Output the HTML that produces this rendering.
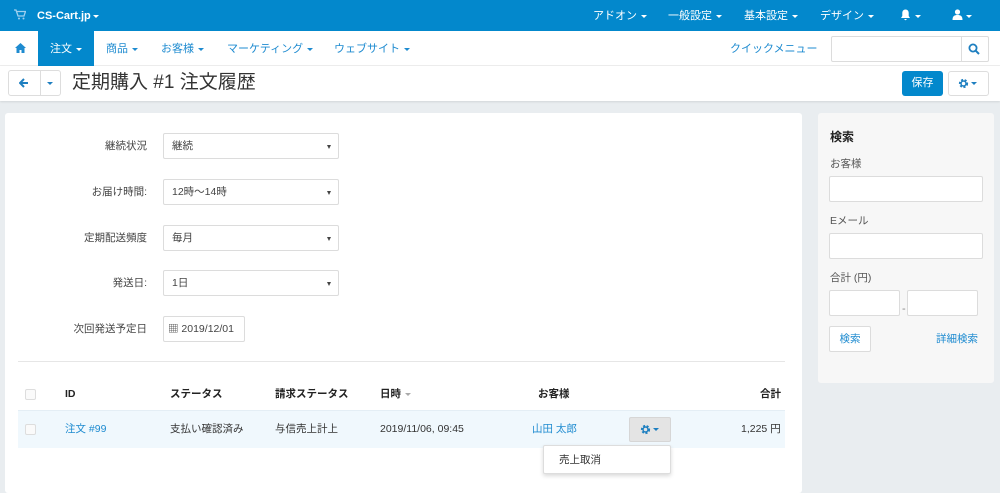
<!DOCTYPE html>
<html><head><meta charset="utf-8"><style>
*{box-sizing:border-box;margin:0;padding:0}
body{width:1000px;height:481px;overflow:hidden;background:#e9edf0;font-family:"Liberation Sans","Noto Sans CJK JP",sans-serif;font-size:11px;line-height:14px;color:#333;position:relative}
.a{position:absolute}
.top{left:0;top:0;width:1000px;height:31px;background:#0388cc;color:#fff;font-size:11px}
.top span{position:absolute;top:9px}
.nav{left:0;top:31px;width:1000px;height:35px;background:#fff;border-bottom:1px solid #eee;color:#1e8bd0;font-size:11px}
.nav span{position:absolute;top:11px}
.caret{display:inline-block;width:0;height:0;border-left:3px solid transparent;border-right:3px solid transparent;border-top:3px solid currentColor;vertical-align:middle;margin-left:4px}
.title{left:0;top:66px;width:1000px;height:35px;background:#fff;box-shadow:0 1px 2px rgba(0,0,0,.1)}
.btn{border:1px solid #ddd;border-radius:3px;background:#fff}
.panel{background:#fff;border-radius:3px}
.lbl{width:147px;text-align:right;left:0;color:#444;font-size:10.5px}
.sel{left:163px;width:176px;height:26px;border:1px solid #dcdcdc;border-radius:2px;background:#fff;font-size:10.5px;padding:5px 8px;color:#444}
.sel:after{content:"";position:absolute;right:7px;top:11px;border-left:2.5px solid transparent;border-right:2.5px solid transparent;border-top:4px solid #444}
.inp{border:1px solid #dcdcdc;border-radius:2px;background:#fff}
.hd{font-weight:bold;font-size:10.5px;top:387px;color:#222}
.rw{top:422px;font-size:10.5px}
.cb{width:11px;height:11px;border:1px solid #ddd;border-radius:2px;background:#fafafa}
</style></head><body>
<div class="a top">
<svg class="a" style="left:14px;top:9px" width="12" height="11" viewBox="0 0 12 11"><path d="M0 1h2l2 6h6l1.5-4.5H3" fill="none" stroke="#9fd0ef" stroke-width="1.3"/><circle cx="5" cy="9.5" r="1" fill="#9fd0ef"/><circle cx="9.5" cy="9.5" r="1" fill="#9fd0ef"/></svg>
<span style="left:37px;font-weight:bold">CS-Cart.jp<i class="caret" style="margin-left:2px"></i></span>
<span style="left:593px">アドオン<i class="caret"></i></span>
<span style="left:668px">一般設定<i class="caret"></i></span>
<span style="left:744px">基本設定<i class="caret"></i></span>
<span style="left:820px">デザイン<i class="caret"></i></span>
<svg class="a" style="left:900px;top:9px" width="11" height="12" viewBox="0 0 11 12"><path d="M5.5 0.5c-2 0-3.2 1.5-3.2 3.5v3L1 9h9L8.7 7V4c0-2-1.2-3.5-3.2-3.5zM4.3 10h2.4a1.2 1.2 0 0 1-2.4 0z" fill="#fff"/></svg>
<span style="left:911px"><i class="caret"></i></span>
<svg class="a" style="left:952px;top:9px" width="11" height="11" viewBox="0 0 11 11"><circle cx="5.5" cy="3" r="2.6" fill="#fff"/><path d="M0.5 11c0-4 2-5 5-5s5 1 5 5z" fill="#fff"/></svg>
<span style="left:962px"><i class="caret"></i></span>
</div>
<div class="a nav">
<svg class="a" style="left:15px;top:12px" width="11" height="10" viewBox="0 0 11 10"><path d="M5.5 0L0 5h1.5v5h3V7h2v3h3V5H11z" fill="#1e8bd0"/></svg>
<div class="a" style="left:38px;top:0;width:56px;height:35px;background:#0388cc"></div>
<span style="left:50px;color:#fff">注文<i class="caret"></i></span>
<span style="left:106px">商品<i class="caret"></i></span>
<span style="left:161px">お客様<i class="caret"></i></span>
<span style="left:227px">マーケティング<i class="caret"></i></span>
<span style="left:334px">ウェブサイト<i class="caret"></i></span>
<span style="left:730px">クイックメニュー</span>
<div class="a inp" style="left:831px;top:5px;width:158px;height:26px"></div>
<div class="a" style="left:961px;top:5px;width:1px;height:26px;background:#ddd"></div>
<svg class="a" style="left:968px;top:12px" width="12" height="12" viewBox="0 0 12 12"><circle cx="5" cy="5" r="3.6" fill="none" stroke="#1e7fc0" stroke-width="1.8"/><path d="M7.6 7.6L11 11" stroke="#1e7fc0" stroke-width="2"/></svg>
</div>
<div class="a title">
<div class="a btn" style="left:8px;top:4px;width:53px;height:26px"></div>
<div class="a" style="left:40px;top:4px;width:1px;height:26px;background:#ddd"></div>
<svg class="a" style="left:19px;top:12px" width="10" height="10" viewBox="0 0 10 10"><path d="M5 1L1 5l4 4M1 5h8" fill="none" stroke="#1e7fc0" stroke-width="2"/></svg>
<i class="a caret" style="left:43px;top:16px;color:#1e7fc0"></i>
<div class="a" style="left:72px;top:5px;font-size:19px;line-height:24px;color:#333">定期購入 #1 注文履歴</div>
<div class="a" style="left:902px;top:5px;width:41px;height:25px;background:#0388cc;border-radius:3px;color:#fff;font-size:11px;text-align:center;line-height:25px">保存</div>
<div class="a btn" style="left:948px;top:5px;width:41px;height:25px"></div>
<svg class="a" style="left:958px;top:12px" width="11" height="11" viewBox="0 0 11 11"><circle cx="5.5" cy="5.5" r="3.5" fill="none" stroke="#1e7fc0" stroke-width="2.2" stroke-dasharray="2 1.5"/><circle cx="5.5" cy="5.5" r="2.5" fill="none" stroke="#1e7fc0" stroke-width="1.5"/></svg>
<i class="a caret" style="left:967px;top:16px;color:#1e7fc0"></i>
</div>
<div class="a panel" style="left:5px;top:113px;width:797px;height:380px"></div>
<div class="a lbl" style="top:139px">継続状況</div><div class="a sel" style="top:133px">継続</div>
<div class="a lbl" style="top:185px">お届け時間:</div><div class="a sel" style="top:179px">12時～14時</div>
<div class="a lbl" style="top:231px">定期配送頻度</div><div class="a sel" style="top:225px">毎月</div>
<div class="a lbl" style="top:276px">発送日:</div><div class="a sel" style="top:270px">1日</div>
<div class="a lbl" style="top:322px">次回発送予定日</div>
<div class="a inp" style="left:163px;top:316px;width:82px;height:26px;font-size:10.5px;padding:5px 4px;color:#444">&#9638; 2019/12/01</div>
<div class="a" style="left:18px;top:361px;width:767px;height:1px;background:#e6e6e6"></div>
<div class="a cb" style="left:25px;top:389px"></div>
<div class="a hd" style="left:65px">ID</div>
<div class="a hd" style="left:170px">ステータス</div>
<div class="a hd" style="left:275px">請求ステータス</div>
<div class="a hd" style="left:380px">日時<i class="caret" style="color:#aaa"></i></div>
<div class="a hd" style="left:538px">お客様</div>
<div class="a hd" style="left:760px">合計</div>
<div class="a" style="left:18px;top:410px;width:767px;height:38px;background:#f0f8fd;border-top:1px solid #e4eef5"></div>
<div class="a cb" style="left:25px;top:424px"></div>
<div class="a rw" style="left:65px;color:#1e8bd0">注文 #99</div>
<div class="a rw" style="left:170px">支払い確認済み</div>
<div class="a rw" style="left:275px">与信売上計上</div>
<div class="a rw" style="left:380px">2019/11/06, 09:45</div>
<div class="a rw" style="left:532px;color:#1e8bd0">山田 太郎</div>
<div class="a" style="left:629px;top:417px;width:42px;height:25px;background:#e4e4e4;border:1px solid #d6d6d6;border-radius:2px"></div>
<svg class="a" style="left:640px;top:424px" width="11" height="11" viewBox="0 0 11 11"><circle cx="5.5" cy="5.5" r="3.5" fill="none" stroke="#1e7fc0" stroke-width="2.2" stroke-dasharray="2 1.5"/><circle cx="5.5" cy="5.5" r="2.5" fill="none" stroke="#1e7fc0" stroke-width="1.5"/></svg>
<i class="a caret" style="left:649px;top:428px;color:#1e7fc0"></i>
<div class="a rw" style="left:741px">1,225 円</div>
<div class="a" style="left:543px;top:445px;width:128px;height:29px;background:#fff;border:1px solid #ddd;border-radius:2px;box-shadow:0 2px 4px rgba(0,0,0,.15);font-size:10.5px;padding:7px 15px">売上取消</div>
<div class="a" style="left:818px;top:113px;width:176px;height:270px;background:#f7f7f7;border-radius:3px"></div>
<div class="a" style="left:830px;top:130px;font-weight:bold;font-size:12px;color:#222">検索</div>
<div class="a" style="left:830px;top:157px;color:#555;font-size:10.5px">お客様</div>
<div class="a inp" style="left:829px;top:176px;width:154px;height:26px"></div>
<div class="a" style="left:830px;top:214px;color:#555;font-size:10.5px">Eメール</div>
<div class="a inp" style="left:829px;top:233px;width:154px;height:26px"></div>
<div class="a" style="left:830px;top:271px;color:#555;font-size:10.5px">合計 (円)</div>
<div class="a inp" style="left:829px;top:290px;width:71px;height:26px"></div>
<div class="a" style="left:902px;top:302px;color:#888">-</div>
<div class="a inp" style="left:907px;top:290px;width:71px;height:26px"></div>
<div class="a inp" style="left:829px;top:326px;width:42px;height:26px;color:#1e8bd0;text-align:center;line-height:24px;font-size:10.5px">検索</div>
<div class="a" style="left:936px;top:332px;color:#1e8bd0;font-size:10.5px">詳細検索</div>
</body></html>
